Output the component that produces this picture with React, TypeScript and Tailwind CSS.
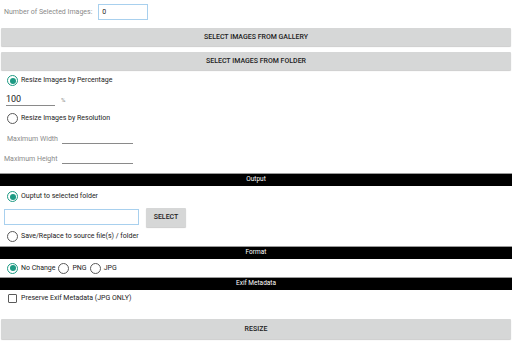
import React from 'react';

const Radio = ({ checked }: { checked?: boolean }) => (
    <span
        className={`flex items-center justify-center w-[11px] h-[11px] rounded-full border shrink-0 ${checked ? 'border-[#1d9a83]' : 'border-[#5a5a5a]'}`}
    >
        {checked && <span className="w-[6px] h-[6px] rounded-full bg-[#1d9a83]"></span>}
    </span>
);

const Bar = ({ label }: { label: string }) => (
    <div className="h-[13px] bg-black border-t border-[#9a9a9a] flex items-center justify-center text-white text-[6.5px]">
        {label}
    </div>
);

const GrayButton = ({ label, className }: { label: string; className: string }) => (
    <div className={`bg-[#d6d7d7] rounded-[1px] shadow-[0_1px_1px_rgba(0,0,0,0.2)] flex items-center justify-center text-[7px] font-medium text-[#222] ${className}`}>
        {label}
    </div>
);

export default function App() {
    return (
        <div className="w-[512px] h-[346px] bg-white font-['Roboto',sans-serif] text-[#222] overflow-hidden">
            {/* Count */}
            <div className="h-[24px] flex items-center px-[4px]">
                <span className="text-[7px] text-[#8a8a8a]">Number of Selected Images:</span>
                <div className="ml-[6px] w-[50px] h-[16px] border border-[#a8d0ee] flex items-center px-[3px] text-[7px]">0</div>
            </div>

            <GrayButton label="SELECT IMAGES FROM GALLERY" className="mt-[4px] mx-[1px] h-[18px]" />
            <GrayButton label="SELECT IMAGES FROM FOLDER" className="mt-[6px] mx-[1px] h-[18px]" />

            {/* Resize options */}
            <div className="h-[20px] pt-[1px] flex items-center gap-[3px] pl-[7px] text-[7px]">
                <Radio checked />
                <span>Resize Images by Percentage</span>
            </div>
            <div className="h-[19px] flex items-center pl-[6px]">
                <div className="w-[49px] border-b border-[#8a8a8a] text-[9px] leading-[12px]">100</div>
                <span className="ml-[6px] text-[6px] text-[#8a8a8a]">%</span>
            </div>
            <div className="h-[19px] flex items-center gap-[3px] pl-[7px] text-[7px]">
                <Radio />
                <span>Resize Images by Resolution</span>
            </div>
            <div className="h-[20px] flex items-end pl-[7px] pb-[4px]">
                <span className="w-[55px] text-[7px] text-[#8a8a8a]">Maximum Width</span>
                <div className="w-[71px] border-b border-[#8a8a8a]"></div>
            </div>
            <div className="h-[20px] flex items-end pl-[4px] pb-[4px]">
                <span className="w-[58px] text-[7px] text-[#8a8a8a]">Maximum Height</span>
                <div className="w-[71px] border-b border-[#8a8a8a]"></div>
            </div>

            <div className="mt-[5px]">
                <Bar label="Output" />
            </div>
            <div className="h-[21px] flex items-center gap-[3px] pl-[7px] text-[7px]">
                <Radio checked />
                <span>Ouptut to selected folder</span>
            </div>
            <div className="h-[20px] flex items-center pl-[4px] gap-[7px]">
                <div className="w-[135px] h-[16px] border border-[#a8d0ee]"></div>
                <GrayButton label="SELECT" className="w-[40px] h-[19px]" />
            </div>
            <div className="h-[19px] flex items-center gap-[3px] pl-[7px] text-[7px]">
                <Radio />
                <span>Save/Replace to source file(s) / folder</span>
            </div>

            <Bar label="Format" />
            <div className="h-[18px] flex items-center pl-[7px] text-[7px]">
                <Radio checked />
                <span className="ml-[3px]">No Change</span>
                <span className="ml-[3px]"><Radio /></span>
                <span className="ml-[3px]">PNG</span>
                <span className="ml-[3px]"><Radio /></span>
                <span className="ml-[3px]">JPG</span>
            </div>

            <Bar label="Exif Metadata" />
            <div className="h-[17px] flex items-center gap-[4px] pl-[8px] text-[7px]">
                <span className="w-[9px] h-[9px] border border-[#5a5a5a] rounded-[1px]"></span>
                <span>Preserve Exif Metadata (JPG ONLY)</span>
            </div>

            <GrayButton label="RESIZE" className="mt-[12px] mx-[1px] h-[20px]" />
        </div>
    );
}
